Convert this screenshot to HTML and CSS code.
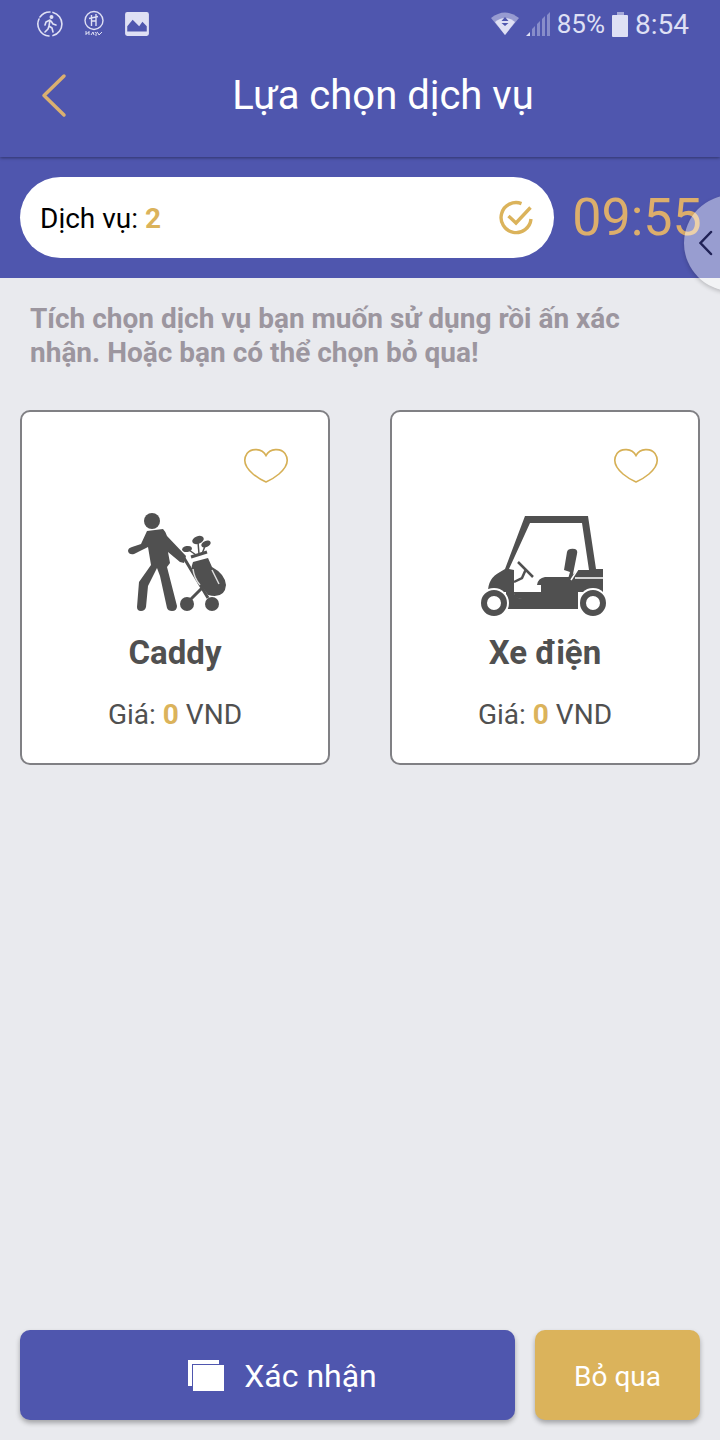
FILE: index.html
```html
<!DOCTYPE html>
<html lang="vi">
<head>
<meta charset="utf-8">
<meta name="viewport" content="width=device-width, initial-scale=1">
<title>Lựa chọn dịch vụ</title>
<link rel="stylesheet" href="styles.css">
</head>
<body>
<div class="app">
  <header class="top">
    <div class="status">
      <div class="status-group notices">
        <svg width="28" height="28" viewBox="0 0 28 28" fill="none" stroke="currentColor" stroke-width="1.6" stroke-linecap="round" stroke-linejoin="round">
          <path d="M17 2.4A12 12 0 0 1 17 25.600M13 26A12 12 0 0 1 3 9M4 7A12 12 0 0 1 14 2"/>
          <circle cx="15.500" cy="7" r="1.200" fill="currentColor"/>
          <path d="M14 10l-1 6 3 2 1 4M13 16l-1 3-3 3M14 10l-4 2-1 3M15 11l2 3 3 1" stroke-width="1.600"/>
        </svg>
        <svg width="20" height="28" viewBox="0 0 20 28" fill="none" stroke="currentColor" stroke-width="1.400">
          <circle cx="10" cy="10.500" r="9"/>
          <path d="M7.500 5v11M12 4v12M5 8.500l9-2M7.500 11h4.500" />
          <path d="M2 21v4M2 23.500l3-1M5 21v4M7 25l2-3 1 3M11 22l1 1.500 2-1.500M12 24v2M14 23l1 2 3-3" stroke-width="1"/>
        </svg>
        <svg width="26" height="26" viewBox="0 0 24 24">
          <path fill="currentColor" fill-rule="evenodd" d="M3 1h18a2 2 0 0 1 2 2v18a2 2 0 0 1-2 2H3a2 2 0 0 1-2-2V3a2 2 0 0 1 2-2zM3 19h18v-5l-4-4-3 4-6-6-5 6z"/>
        </svg>
      </div>
      <div class="status-group">
        <svg width="28" height="24" viewBox="0 0 28 24">
          <path d="M0 6Q14-5 28 6L14 23z" fill="currentColor" opacity=".5"/>
          <path d="M4 10Q14 2 24 10L14 23z" fill="currentColor"/>
          <path d="M14 5l3.500 4h-7zM10.500 11h7L14 14z" fill="#4f56ae"/>
        </svg>
        <svg width="24" height="26" viewBox="0 0 24 26" fill="currentColor">
          <path d="M0 25l4-4v4z"/>
          <path d="M6 18l3-3v10H6zM11 13l3-3v15h-3zM16 8l3-3v20h-3zM21 4l3-3v24h-3z" opacity=".4"/>
        </svg>
        <span class="battery-text">85%</span>
        <svg width="16" height="25" viewBox="0 0 16 25" fill="currentColor">
          <path d="M5 0h7v3H5z" opacity=".6"/><rect y="3" width="16" height="22" rx="1"/>
        </svg>
        <span class="clock">8:54</span>
      </div>
    </div>
    <div class="titlebar">
      <button class="back" type="button" aria-label="Quay lại">
        <svg width="28" height="46" viewBox="0 0 28 46" fill="none" stroke="currentColor" stroke-width="3.500" stroke-linecap="round" stroke-linejoin="round"><path d="M24 3L4 22.500L24 42"/></svg>
      </button>
      <h1>Lựa chọn dịch vụ</h1>
    </div>
  </header>

  <section class="summary">
    <div class="pill">
      <span class="count">Dịch vụ: <b class="gold">2</b></span>
      <svg class="gold" width="36" height="36" viewBox="0 0 36 36" fill="none" stroke="currentColor" stroke-width="3.400">
        <path d="M22.500 3.600A15 15 0 1 0 32 19"/><path d="M9.500 16l7.500 7L31.500 7.500"/>
      </svg>
    </div>
    <time class="timer">09:55</time>
    <button class="edge" type="button" aria-label="Mở bảng cạnh">
      <svg width="14" height="26" viewBox="0 0 14 26" fill="none" stroke="currentColor" stroke-width="2.500" stroke-linecap="round"><path d="M12 2L1.500 13L12 24"/></svg>
    </button>
  </section>

  <main>
    <p class="hint">Tích chọn dịch vụ bạn muốn sử dụng rồi ấn xác nhận. Hoặc bạn có thể chọn bỏ qua!</p>
    <div class="cards">
      <article class="card">
        <button class="like" type="button" aria-label="Chọn Caddy">
          <svg width="46" height="36" viewBox="0 0 46 36" fill="none" stroke="currentColor" stroke-width="1.600"><path d="M23 7.500C19 0 8 0 4 5.500C-1 13 3 20 10 26Q16 31 23 34Q30 31 36 26C43 20 47 13 42 5.500C38 0 27 0 23 7.500z"/></svg>
        </button>
        <svg class="picture" width="130" height="110" viewBox="0 0 130 110" fill="currentColor">
          <circle cx="42" cy="13" r="8"/>
          <path d="M37 23L53 21Q56 24 57 28L76 48L74 55L70 54L58 44L60 55L57 59L67 98Q67 103 62 103Q58 103 57 100L50 68L47 60L38 78L36 99Q35 103 31 103Q27 103 27 99L29 74L41 57L38 39L24 46Q19 47 18 43Q18 40 22 39L31 36Z"/>
          <path d="M74 50L98 90M92 80L80 92" fill="none" stroke="currentColor" stroke-width="3"/>
          <path d="M83 54L98 50L102 59Q115 66 116 77Q115 91 98 87L84 68Q80 61 83 54z"/>
          <path d="M81 49L97 44" fill="none" stroke="currentColor" stroke-width="3"/>
          <ellipse cx="77" cy="41" rx="5" ry="3" transform="rotate(-10 77 41)"/>
          <ellipse cx="88" cy="32" rx="6" ry="3.800" transform="rotate(-20 88 32)"/>
          <ellipse cx="96" cy="36" rx="5" ry="3" transform="rotate(-25 96 36)"/>
          <path d="M79 42l7 5M88 34l1 12M95 38l-3 8" stroke="currentColor" stroke-width="1.500"/>
          <path d="M83 61q1 9 7 16M102 62l7 14" fill="none" stroke="#ddd" stroke-width="1.500"/>
          <circle cx="77" cy="96" r="7"/><circle cx="102" cy="96" r="7"/>
        </svg>
        <h2>Caddy</h2>
        <p class="price">Giá: <b class="gold">0</b> VND</p>
      </article>
      <article class="card">
        <button class="like" type="button" aria-label="Chọn Xe điện">
          <svg width="46" height="36" viewBox="0 0 46 36" fill="none" stroke="currentColor" stroke-width="1.600"><path d="M23 7.500C19 0 8 0 4 5.500C-1 13 3 20 10 26Q16 31 23 34Q30 31 36 26C43 20 47 13 42 5.500C38 0 27 0 23 7.500z"/></svg>
        </button>
        <svg class="picture" width="130" height="110" viewBox="0 0 130 110" fill="currentColor">
          <path fill-rule="evenodd" d="M45 8H108L116 61H123V84H8Q8 70 20 64L25 61zM50 15L29 61L34 62V85Q35 91 42 91H61V77H57Q58 70 65 69H90L98 62H109L102 15z"/>
          <path d="M34 80V101H98V76H61V91H42Q35 90 34 84zM26 78H34V101H26z"/>
          <path d="M87 44Q88 40 95 41Q98 42 97 46L92 71H88L90 64L84 62z"/>
          <path d="M38 54L53 69M46 61L42 70L34 74" fill="none" stroke="currentColor" stroke-width="2.500"/>
          <path d="M95 70H124M91 72l7-11" fill="none" stroke="#fff" stroke-width="1.500"/>
          <circle cx="14" cy="95" r="15" fill="#fff"/><circle cx="113" cy="95" r="15" fill="#fff"/>
          <circle cx="14" cy="95" r="10" fill="none" stroke="currentColor" stroke-width="6"/>
          <circle cx="113" cy="95" r="10" fill="none" stroke="currentColor" stroke-width="6"/>
        </svg>
        <h2>Xe điện</h2>
        <p class="price">Giá: <b class="gold">0</b> VND</p>
      </article>
    </div>
  </main>

  <footer class="actions">
    <button class="confirm" type="button">
      <svg width="36" height="32" viewBox="0 0 36 32" fill="currentColor"><path d="M0 0h31v4H4v22H0zM5 5h31v26H5z"/></svg>
      Xác nhận
    </button>
    <button class="skip" type="button">Bỏ qua</button>
  </footer>
</div>
</body>
</html>
```
FILE: styles.css
```css
* { box-sizing: border-box; }
body {
  margin: 0;
  background: #e9eaee;
  font-family: Roboto, "Noto Sans", sans-serif;
  color: #505050;
}
h1, h2, p { margin: 0; }
button {
  border: 0;
  padding: 0;
  background: none;
  font: inherit;
  color: inherit;
}
svg { display: block; flex: none; }
.gold { color: #dbb35b; }
.app {
  min-height: 100vh;
  display: flex;
  flex-direction: column;
  overflow-x: hidden;
}
.top {
  position: relative;
  z-index: 1;
  background: #4f56ae;
  box-shadow: 0 1px 3px rgba(0, 0, 0, .4);
}
.status {
  display: flex;
  justify-content: space-between;
  align-items: center;
  height: 48px;
  padding: 0 31px 0 36px;
  color: #dfe0f4;
  font-size: 28px;
}
.status-group {
  display: flex;
  align-items: center;
  gap: 7px;
}
.notices { gap: 20px; }
.battery-text { font-size: 26px; }
.titlebar {
  display: grid;
  grid-template-columns: 46px 1fr;
  align-items: center;
  padding: 24px 0 38px 40px;
}
.back { color: #dbb070; width: 28px; }
h1 {
  color: #fff;
  font-size: 40px;
  line-height: 47px;
  font-weight: 400;
  text-align: center;
  padding-right: 40px;
}
.summary {
  position: relative;
  display: flex;
  align-items: center;
  gap: 20px;
  padding: 20px;
  background: #4f56ae;
}
.pill {
  flex: 1;
  display: flex;
  justify-content: space-between;
  align-items: center;
  height: 81px;
  padding: 0 19px 0 20px;
  border-radius: 41px;
  background: #fff;
  color: #000;
  font-size: 28px;
}
.count { padding-top: 2px; }
.timer {
  width: 126px;
  display: flex;
  justify-content: center;
  color: #dcae6b;
  font-size: 52px;
  font-weight: 400;
  line-height: 60px;
}
.edge {
  position: absolute;
  right: -60px;
  top: 38px;
  width: 96px;
  height: 96px;
  padding-left: 15px;
  border-radius: 50%;
  background: rgba(255, 255, 255, .42);
  box-shadow: 0 2px 4px rgba(0, 0, 0, .2);
  color: #202256;
  z-index: 1;
}
main { flex: 1; padding: 24px 20px; }
.hint {
  padding: 0 10px;
  color: #9c969f;
  font-size: 28px;
  line-height: 34px;
  font-weight: 700;
}
.cards {
  display: grid;
  grid-template-columns: 1fr 1fr;
  gap: 60px;
  margin-top: 40px;
}
.card {
  display: flex;
  flex-direction: column;
  align-items: center;
  padding: 36px 20px 31px;
  border: 2px solid #808084;
  border-radius: 10px;
  background: #fff;
}
.like { align-self: flex-end; margin-right: 19px; color: #d6b056; }
.picture { margin-top: 24px; color: #505050; }
h2 {
  margin-top: 15px;
  font-size: 33px;
  line-height: 40px;
  font-weight: 700;
}
.price { margin-top: 25px; font-size: 28px; line-height: 34px; }
.actions {
  display: grid;
  grid-template-columns: 3fr 1fr;
  gap: 20px;
  padding: 20px;
}
.confirm, .skip {
  display: flex;
  justify-content: center;
  align-items: center;
  gap: 20px;
  height: 90px;
  padding-top: 2px;
  border-radius: 10px;
  color: #fff;
  box-shadow: 0 3px 5px rgba(0, 0, 0, .3);
}
.confirm { padding-left: 30px; background: #4f56ae; font-size: 32px; }
.skip { background: #dbb35b; font-size: 28px; }
```
